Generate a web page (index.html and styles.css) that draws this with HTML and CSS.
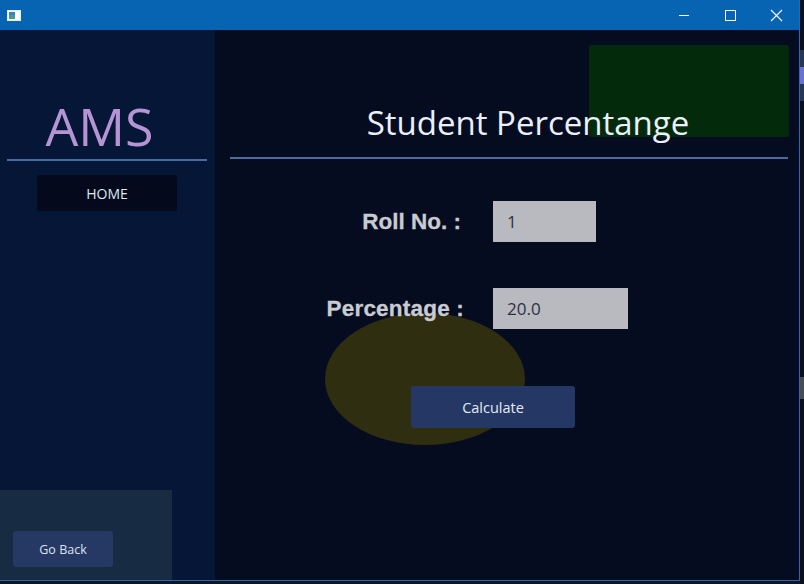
FILE: index.html
```html
<!DOCTYPE html>
<html>
<head>
<meta charset="utf-8">
<link rel="stylesheet" href="styles.css">
</head>
<body>
<div class="screen">
  <div class="window">
    <div class="titlebar">
      <svg class="app-icon" width="14" height="11" viewBox="0 0 14 11">
        <rect x="0.5" y="0.5" width="13" height="10" fill="#f4f6f8" stroke="#e8ecef"/>
        <rect x="2" y="2" width="6" height="7" fill="#4a9a8a"/>
        <rect x="2" y="2" width="6" height="3" fill="#3f7fc0"/>
        <rect x="9" y="2" width="3" height="7" fill="#ffffff"/>
      </svg>
      <div class="controls">
        <svg class="ctl" width="46" height="30" viewBox="0 0 46 30"><line x1="18" y1="15.5" x2="28" y2="15.5" stroke="#fff" stroke-width="1"/></svg>
        <svg class="ctl" width="46" height="30" viewBox="0 0 46 30"><rect x="18.5" y="10.5" width="10" height="10" fill="none" stroke="#fff" stroke-width="1"/></svg>
        <svg class="ctl" width="46" height="30" viewBox="0 0 46 30"><path d="M18 10 L29 21 M29 10 L18 21" stroke="#fff" stroke-width="1.1"/></svg>
      </div>
    </div>
    <div class="client">
      <aside class="sidebar">
        <div class="logo">AMS</div>
        <div class="side-rule"></div>
        <button class="home-btn">HOME</button>
        <div class="back-panel">
          <button class="back-btn">Go Back</button>
        </div>
      </aside>
      <main class="main">
        <div class="green-box"></div>
        <div class="ellipse"></div>
        <h1 class="title">Student Percentange</h1>
        <div class="main-rule"></div>
        <div class="form">
          <div class="row">
            <label class="lbl lbl-roll">Roll No. :</label>
            <div class="field field-short">1</div>
          </div>
          <div class="row">
            <label class="lbl">Percentage :</label>
            <div class="field field-long">20.0</div>
          </div>
          <div class="actions">
            <button class="calc-btn">Calculate</button>
          </div>
        </div>
      </main>
    </div>
  </div>
  <div class="edge">
    <div class="edge-gap"></div>
    <div class="edge-track"></div>
    <div class="edge-thumb"></div>
    <div class="edge-track"></div>
    <div class="edge-gap2"></div>
    <div class="edge-check"></div>
  </div>
</div>
</body>
</html>
```

FILE: styles.css
```css
* { box-sizing: border-box; }
html, body { margin: 0; padding: 0; }
body {
  width: 804px;
  height: 584px;
  overflow: hidden;
  background: #12151c;
  font-family: "Open Sans", "Noto Sans", sans-serif;
}
.screen { display: flex; width: 804px; height: 584px; }
.window {
  width: 800px;
  height: 581px;
  display: flex;
  flex-direction: column;
  border-right: 1px solid #1f6cbf;
  border-bottom: 1px solid #1f6cbf;
}
.titlebar {
  height: 30px;
  flex: none;
  background: #0764b3;
  display: flex;
  align-items: center;
  justify-content: space-between;
  padding-left: 7px;
}
.app-icon { display: block; }
.controls { display: flex; }
.ctl { display: block; }
.client { flex: 1; display: flex; min-height: 0; }
.sidebar {
  width: 215px;
  flex: none;
  background: #061637;
  display: flex;
  flex-direction: column;
  align-items: center;
  padding-right: 1px;
}
.logo {
  margin-top: 66px;
  height: 60px;
  line-height: 60px;
  font-size: 52px;
  color: #b594d3;
  padding-right: 15px;
}
.side-rule {
  margin-top: 3px;
  width: 200px;
  height: 2px;
  background: #4a6ba2;
}
.home-btn {
  margin-top: 14px;
  width: 140px;
  height: 36px;
  background: #040a1c;
  border: none;
  border-radius: 3px;
  color: #dfe8f3;
  font-family: "Open Sans", sans-serif;
  font-size: 14px;
}
.back-panel {
  margin-top: auto;
  align-self: flex-start;
  width: 172px;
  height: 90px;
  background: #172b42;
  padding: 41px 0 0 13px;
}
.back-btn {
  width: 100px;
  height: 36px;
  background: #263864;
  border: none;
  border-radius: 3px;
  color: #dbe3ef;
  font-family: "Open Sans", sans-serif;
  font-size: 12.5px;
}
.main {
  flex: 1;
  position: relative;
  background: #050c1f;
  padding: 73px 11px 0 15px;
}
.green-box {
  position: absolute;
  left: 374px;
  top: 15px;
  width: 200px;
  height: 92px;
  background: #032a0b;
  border-radius: 2px;
}
.ellipse {
  position: absolute;
  left: 110px;
  top: 283px;
  width: 200px;
  height: 132px;
  border-radius: 50%;
  background: #2f2e10;
}
.title {
  position: relative;
  margin: 0;
  height: 40px;
  line-height: 40px;
  font-size: 33px;
  font-weight: 400;
  color: #eaf0fa;
  text-align: center;
  padding-left: 38px;
}
.main-rule {
  margin-top: 14px;
  height: 2px;
  background: #4a6ba2;
}
.form {
  position: relative;
  margin-top: 42px;
  display: flex;
  flex-direction: column;
  gap: 46px;
}
.row {
  display: flex;
  align-items: center;
  height: 41px;
}
.lbl {
  width: 234px;
  text-align: right;
  font-family: "Liberation Sans", Arial, sans-serif;
  font-weight: bold;
  font-size: 22.5px;
  letter-spacing: 0.2px;
  color: #c8cbd2;
  -webkit-text-stroke: 0.3px #c8cbd2;
}
.lbl-roll { padding-right: 3px; letter-spacing: 0; }
.field {
  margin-left: 29px;
  height: 41px;
  background: #b9babf;
  color: #2c3140;
  font-size: 17px;
  line-height: 41px;
  padding-left: 14px;
}
.field-short { width: 103px; }
.field-long { width: 135px; }
.actions { margin-top: 11px; padding-left: 181px; }
.calc-btn {
  width: 164px;
  height: 42px;
  background: #253764;
  border: none;
  border-radius: 3px;
  color: #e4ebf5;
  font-family: "Open Sans", sans-serif;
  font-size: 14.5px;
}
.edge {
  width: 4px;
  display: flex;
  flex-direction: column;
  background: #0b101a;
}
.edge-gap { height: 50px; }
.edge-track { height: 17px; background: #2a3550; }
.edge-thumb { height: 17px; background: #6c70d2; }
.edge-gap2 { height: 276px; }
.edge-check { height: 22px; background: #4a4c52; }
```
